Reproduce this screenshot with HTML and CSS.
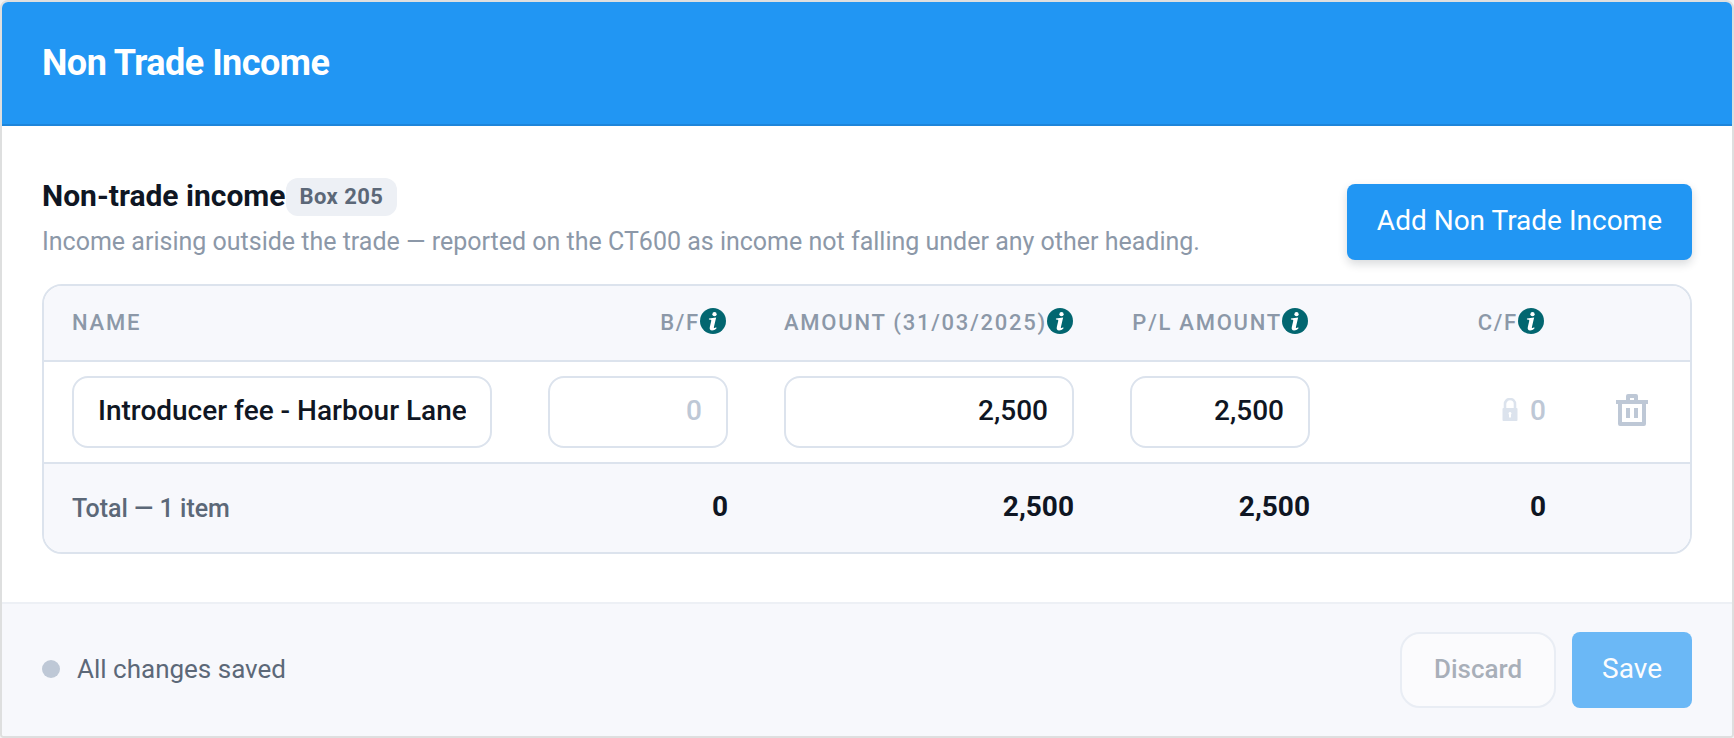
FILE: index.html
```html
<!DOCTYPE html>
<html lang="en">
<head>
    <meta charset="UTF-8">
    <meta name="viewport" content="width=device-width, initial-scale=1.0">
    <title>Non Trade Income</title>
    <link rel="stylesheet" href="styles.css">
</head>
<body>
    <svg class="sprite" aria-hidden="true">
        <symbol id="icon-info" viewBox="0 0 512 512">
            <circle cx="256" cy="256" r="256" fill="#026670"/>
            <circle cx="286" cy="122" r="42" fill="#fff"/>
            <path d="M176 206l142-18-44 186c-3 16 0 22 9 22 10 0 23-7 35-17l8 20c-24 29-60 43-88 43-40 0-54-24-45-66l28-120c3-16 2-22-12-25l-33-5z" fill="#fff"/>
        </symbol>
    </svg>

    <div class="card">
        <header class="card-header">
            <h1 class="card-title">Non Trade Income</h1>
        </header>

        <main class="card-body">
            <div class="section-head">
                <div class="section-text">
                    <div class="section-title-row">
                        <h2 class="section-title">Non-trade income</h2>
                        <span class="badge">Box 205</span>
                    </div>
                    <p class="section-desc">Income arising outside the trade — reported on the CT600 as income not falling under any other heading.</p>
                </div>
                <button type="button" class="btn btn-primary">Add Non Trade Income</button>
            </div>

            <div class="table-wrap">
                <table class="income-table">
                    <colgroup>
                        <col class="col-name">
                        <col class="col-money">
                        <col class="col-amount">
                        <col class="col-money">
                        <col class="col-money">
                        <col class="col-action">
                    </colgroup>
                    <thead>
                        <tr>
                            <th scope="col">Name</th>
                            <th scope="col" class="num"><span class="th-label">B/F<svg class="info"><use href="#icon-info"/></svg></span></th>
                            <th scope="col" class="num"><span class="th-label">Amount (31/03/2025)<svg class="info"><use href="#icon-info"/></svg></span></th>
                            <th scope="col" class="num"><span class="th-label">P/L Amount<svg class="info"><use href="#icon-info"/></svg></span></th>
                            <th scope="col" class="num"><span class="th-label">C/F<svg class="info"><use href="#icon-info"/></svg></span></th>
                            <td></td>
                        </tr>
                    </thead>
                    <tbody>
                        <tr>
                            <td><input type="text" class="field" aria-label="Name" value="Introducer fee - Harbour Lane"></td>
                            <td><input type="text" class="field field-num" aria-label="B/F" placeholder="0"></td>
                            <td><input type="text" class="field field-num" aria-label="Amount" value="2,500"></td>
                            <td><input type="text" class="field field-num" aria-label="P/L amount" value="2,500"></td>
                            <td>
                                <div class="locked">
                                    <svg class="lock" viewBox="0 0 16 24" aria-hidden="true">
                                        <path d="M3 11V6a5 5 0 0 1 10 0v5" fill="none" stroke="currentColor" stroke-width="2.6"/>
                                        <path fill-rule="evenodd" d="M1.500 10h13a1 1 0 0 1 1 1v11a1 1 0 0 1-1 1h-13a1 1 0 0 1-1-1V11a1 1 0 0 1 1-1zM8 14a1.500 1.500 0 0 0-1 2.600V19.500h2V16.600A1.500 1.500 0 0 0 8 14z" fill="currentColor"/>
                                    </svg>
                                    <span>0</span>
                                </div>
                            </td>
                            <td class="action">
                                <button type="button" class="icon-btn" aria-label="Delete">
                                    <svg viewBox="0 0 32 32" fill="currentColor" aria-hidden="true">
                                        <path fill-rule="evenodd" d="M12 0h8a2 2 0 0 1 2 2v4h10v4h-2v20a2 2 0 0 1-2 2H4a2 2 0 0 1-2-2V10H0V6h10V2a2 2 0 0 1 2-2zM14 4v2h4V4zM6 10v18h20V10z"/>
                                        <path d="M10 14h4v10h-4zM18 14h4v10h-4z"/>
                                    </svg>
                                </button>
                            </td>
                        </tr>
                    </tbody>
                    <tfoot>
                        <tr>
                            <th scope="row">Total — 1 item</th>
                            <td class="num">0</td>
                            <td class="num">2,500</td>
                            <td class="num">2,500</td>
                            <td class="num">0</td>
                            <td></td>
                        </tr>
                    </tfoot>
                </table>
            </div>
        </main>

        <footer class="card-footer">
            <div class="status"><span class="status-dot"></span>All changes saved</div>
            <div class="footer-actions">
                <button type="button" class="btn btn-outline" disabled>Discard</button>
                <button type="button" class="btn btn-primary" disabled>Save</button>
            </div>
        </footer>
    </div>
</body>
</html>
```
FILE: styles.css
```css
* {
    box-sizing: border-box;
}
body {
    margin: 0;
    background: #f2f2f2;
    color: #0f1623;
    font-family: Roboto, "Liberation Sans", sans-serif;
    font-size: 28px;
}
.sprite {
    display: none;
}
.card {
    border: 2px solid #dedfdf;
    border-radius: 8px 8px 4px 4px;
    background: #fff;
    overflow: hidden;
}

/* header */
.card-header {
    padding: 40px;
    background: #2196f3;
    border-bottom: 2px solid #1e85da;
}
.card-title {
    margin: 0;
    color: #fff;
    font-size: 36px;
    line-height: 42px;
    font-weight: 700;
    letter-spacing: -0.015em;
}

/* body */
.card-body {
    padding: 48px 40px;
}
.section-head {
    display: flex;
    align-items: flex-end;
    justify-content: space-between;
    gap: 32px;
    margin-bottom: 24px;
}
.section-title-row {
    display: flex;
    align-items: center;
    margin-bottom: 4px;
}
.section-title {
    margin: 0;
    padding-bottom: 2px;
    font-size: 30px;
    line-height: 44px;
    font-weight: 700;
}
.badge {
    padding: 5px 14px;
    border-radius: 12px;
    background: #edf0f5;
    color: #5c6878;
    font-size: 22px;
    line-height: 28px;
    font-weight: 700;
    letter-spacing: 0.02em;
}
.section-desc {
    margin: 0;
    color: #8c98a8;
    font-size: 25px;
    line-height: 36px;
}

/* buttons */
.btn {
    height: 76px;
    padding: 0 30px 4px;
    border: none;
    border-radius: 8px;
    font-family: inherit;
    font-size: 28px;
    white-space: nowrap;
    cursor: pointer;
}
.btn-primary {
    background: #2196f3;
    color: #fff;
    box-shadow: 0 4px 10px rgba(15, 22, 35, 0.16);
}
.btn-outline {
    padding: 0 32px 2px;
    border: 2px solid #dce3ed;
    border-radius: 20px;
    background: #fff;
    color: #5c6878;
    font-size: 26px;
    font-weight: 500;
}
.btn:disabled {
    cursor: default;
    box-shadow: none;
}
.btn-primary:disabled {
    opacity: 0.65;
}
.btn-outline:disabled {
    opacity: 0.5;
}

/* table */
.table-wrap {
    border: 2px solid #dce3ed;
    border-radius: 20px;
    overflow: hidden;
}
.income-table {
    width: 100%;
    table-layout: fixed;
    border-collapse: separate;
    border-spacing: 0;
}
.col-money {
    width: 236px;
}
.col-amount {
    width: 346px;
}
.col-action {
    width: 116px;
}
.income-table th,
.income-table td {
    padding: 14px 28px;
    text-align: left;
}
.income-table .num {
    text-align: right;
}
.income-table thead th,
.income-table thead td {
    height: 76px;
    padding-top: 0;
    padding-bottom: 2px;
    border-bottom: 2px solid #dce3ed;
    background: #f7f8fc;
    color: #8c98a8;
    font-size: 22px;
    font-weight: 500;
    letter-spacing: 0.08em;
    text-transform: uppercase;
    white-space: nowrap;
}
.th-label {
    display: inline-flex;
    align-items: center;
    padding-right: 2px;
}
.info {
    width: 26px;
    height: 26px;
    margin-bottom: 2px;
}
.field {
    display: block;
    width: 100%;
    height: 72px;
    padding: 0 24px 4px;
    border: 2px solid #dce3ed;
    border-radius: 16px;
    background: #fff;
    color: inherit;
    font-family: inherit;
    font-size: 28px;
    font-weight: 500;
    outline: none;
}
.field:focus {
    border-color: #2196f3;
}
.field::placeholder {
    color: #bec8d6;
    opacity: 1;
}
.field-num {
    text-align: right;
}
.locked {
    display: flex;
    align-items: center;
    justify-content: flex-end;
    gap: 12px;
    padding-bottom: 4px;
    color: #bec8d6;
    font-weight: 500;
}
.lock {
    width: 16px;
    height: 24px;
    color: #dce3ed;
}
.income-table .action {
    padding: 0 0 4px;
    text-align: center;
}
.icon-btn {
    padding: 8px;
    border: none;
    background: none;
    color: #bec8d6;
    cursor: pointer;
}
.icon-btn svg {
    display: block;
    width: 32px;
    height: 32px;
}
.income-table tfoot th,
.income-table tfoot td {
    height: 90px;
    padding-bottom: 18px;
    border-top: 2px solid #dce3ed;
    background: #f7f8fc;
    font-weight: 700;
}
.income-table tfoot th {
    padding-bottom: 14px;
    color: #5c6878;
    font-size: 25px;
    font-weight: 500;
}

/* footer */
.card-footer {
    display: flex;
    align-items: center;
    justify-content: space-between;
    padding: 28px 40px;
    border-top: 2px solid #edf0f5;
    background: #f7f8fc;
}
.status {
    display: flex;
    align-items: center;
    gap: 17px;
    padding-bottom: 2px;
    color: #5c6878;
    font-size: 26px;
}
.status-dot {
    width: 18px;
    height: 18px;
    border-radius: 50%;
    background: #bec8d6;
}
.footer-actions {
    display: flex;
    gap: 16px;
}
```
